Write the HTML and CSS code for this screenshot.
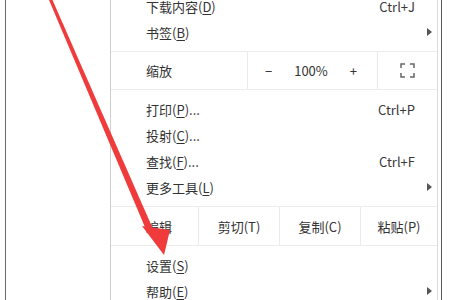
FILE: index.html
```html
<!DOCTYPE html>
<html lang="zh-CN">
<head>
<meta charset="utf-8">
<link rel="stylesheet" href="styles.css">
</head>
<body>
<div class="stage">
  <div class="pane"></div>
  <div class="menu">
    <div class="group">
      <div class="row"><span class="label">下载内容(<u>D</u>)</span><span class="key">Ctrl+J</span></div>
      <div class="row"><span class="label">书签(<u>B</u>)</span><span class="sub"></span></div>
    </div>
    <div class="group flat">
      <div class="row tall zoom">
        <span class="label cell-label">缩放</span>
        <div class="cell zoomctl"><span>−</span><span>100%</span><span>+</span></div>
        <div class="cell fill">
          <svg class="fs" width="15" height="15" viewBox="0 0 15 15" fill="none" stroke="#666" stroke-width="1.5">
            <path d="M1 5V1h4M10 1h4v4M14 10v4h-4M5 14H1v-4"/>
          </svg>
        </div>
      </div>
    </div>
    <div class="group">
      <div class="row"><span class="label">打印(<u>P</u>)...</span><span class="key">Ctrl+P</span></div>
      <div class="row"><span class="label">投射(<u>C</u>)...</span></div>
      <div class="row"><span class="label">查找(<u>F</u>)...</span><span class="key">Ctrl+F</span></div>
      <div class="row"><span class="label">更多工具(<u>L</u>)</span><span class="sub"></span></div>
    </div>
    <div class="group flat">
      <div class="row tall edit">
        <span class="label edit-label">编辑</span>
        <div class="cell ecell">剪切(T)</div>
        <div class="cell ecell">复制(C)</div>
        <div class="cell fill">粘贴(P)</div>
      </div>
    </div>
    <div class="group last">
      <div class="row"><span class="label">设置(<u>S</u>)</span></div>
      <div class="row"><span class="label">帮助(<u>E</u>)</span><span class="sub"></span></div>
    </div>
  </div>
  <div class="edge"></div>
</div>
<svg class="arrow" width="450" height="300" viewBox="0 0 450 300">
  <polygon points="49,0 52.5,0 153,229 147,232" fill="#ef3b3b"/>
  <polygon points="142,226 170,230 164,255" fill="#ef3b3b"/>
</svg>
</body>
</html>
```
FILE: styles.css
```css
html, body {
  margin: 0;
  padding: 0;
  background: #fff;
  overflow: hidden;
}
body {
  width: 450px;
  height: 300px;
  position: relative;
  font-family: "Noto Sans CJK SC", "Microsoft YaHei", sans-serif;
  font-size: 13px;
  color: #333;
}
.stage {
  display: flex;
  height: 300px;
  padding-left: 5px;
}
.pane {
  width: 104px;
  border-left: 1.5px solid #6a6a6a;
  flex: none;
}
.menu {
  width: 326px;
  flex: none;
  border-left: 1px solid #cfcfcf;
  border-right: 1px solid #dcdcdc;
  margin-top: -13px;
  background: #fff;
}
.edge {
  width: 0;
  margin-left: 3px;
  border-left: 1.5px solid #5a5a5a;
}
.group {
  padding: 6px 0;
  border-bottom: 1px solid #ebebeb;
}
.group.flat {
  padding: 0;
}
.group.last {
  border-bottom: none;
}
.row {
  height: 26px;
  display: flex;
  align-items: center;
  padding-left: 35px;
}
.row .label {
  flex: 1;
}
.key {
  margin-right: 22px;
  color: #3a3a3a;
}
.sub {
  width: 0;
  height: 0;
  border-top: 4px solid transparent;
  border-bottom: 4px solid transparent;
  border-left: 5px solid #555;
  margin-right: 5px;
}
u {
  text-decoration-thickness: 1px;
  text-underline-offset: 2px;
}
.row.tall {
  height: 37px;
  padding-left: 0;
  align-items: stretch;
}
.row.edit {
  height: 38px;
}
.cell-label {
  flex: none !important;
  width: 101px;
  padding-left: 35px;
  display: flex;
  align-items: center;
}
.edit-label {
  flex: none !important;
  width: 52px;
  padding-left: 35px;
  display: flex;
  align-items: center;
}
.cell {
  border-left: 1px solid #ebebeb;
  display: flex;
  align-items: center;
  justify-content: center;
}
.zoomctl {
  width: 129px;
  justify-content: space-between;
  padding: 0 20px 0 17px;
  box-sizing: border-box;
  width: 130px;
}
.ecell {
  width: 81px;
  box-sizing: border-box;
}
.fill {
  flex: 1;
}
.fs {
  display: block;
}
.arrow {
  position: absolute;
  left: 0;
  top: 0;
  pointer-events: none;
}
```
